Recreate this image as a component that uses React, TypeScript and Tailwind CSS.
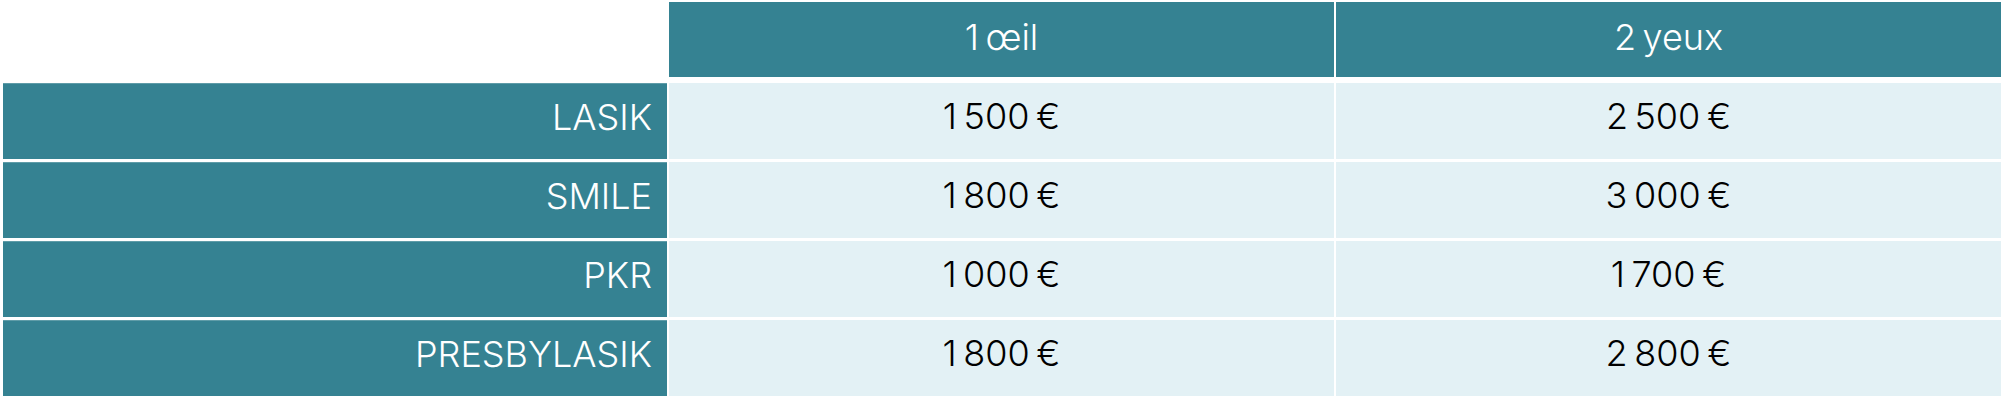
import React from 'react';

const rows = [
    { name: 'LASIK', one: '1\u202f500\u202f€', two: '2\u202f500\u202f€' },
    { name: 'SMILE', one: '1\u202f800\u202f€', two: '3\u202f000\u202f€' },
    { name: 'PKR', one: '1\u202f000\u202f€', two: '1\u202f700\u202f€' },
    { name: 'PRESBYLASIK', one: '1\u202f800\u202f€', two: '2\u202f800\u202f€' },
];

const App = () => {
    return (
        <div className="w-[2007px] h-[407px] bg-white pt-[2px] pl-[3px] font-['Inter','Liberation_Sans',sans-serif] font-light text-[36px]">
            {/* Header */}
            <div className="grid grid-cols-[664px_665px_665px] gap-x-[2px]">
                <div className="h-[75px]" />
                <div className="h-[75px] pb-[5px] bg-[#358292] text-white flex items-center justify-center">1{'\u202f'}œil</div>
                <div className="h-[75px] pb-[5px] bg-[#358292] text-white flex items-center justify-center">2{'\u202f'}yeux</div>
            </div>

            {/* Body */}
            <div className="mt-[6px] grid grid-cols-[664px_665px_665px] gap-x-[2px] gap-y-[3px]">
                {rows.map((r) => (
                    <React.Fragment key={r.name}>
                        <div className="h-[76px] pb-[10px] bg-[#358292] border-t border-[#5f9ca8] text-white flex items-center justify-end pr-[15px]">{r.name}</div>
                        <div className="h-[76px] pb-[10px] bg-[#e3f1f5] text-black flex items-center justify-center tracking-[2px]">{r.one}</div>
                        <div className="h-[76px] pb-[10px] bg-[#e3f1f5] text-black flex items-center justify-center tracking-[2px]">{r.two}</div>
                    </React.Fragment>
                ))}
            </div>
        </div>
    );
};

export default App;
